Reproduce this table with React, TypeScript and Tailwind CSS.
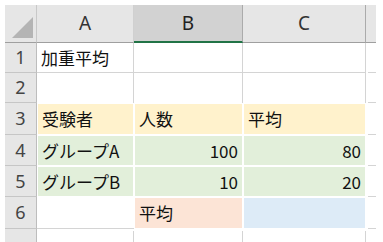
import React from 'react';

type CellProps = {
  text?: string;
  right?: boolean;
  fill?: string;
  edge?: string;
};

// one worksheet cell; filled cells get a white frame around the fill
const Cell: React.FC<CellProps> = ({ text, right, fill, edge = 'border-r border-b border-[#d4d4d4]' }) => {
  const label = (
    <span className={`w-full ${right ? 'text-right pr-[4px]' : 'pl-[4px]'} whitespace-nowrap`}>{text}</span>
  );
  if (fill) {
    return (
      <div className="flex pt-px pl-px border-r border-b border-white">
        <div className={`flex-1 flex items-center ${fill}`}>{label}</div>
      </div>
    );
  }
  return <div className={`flex items-center ${edge}`}>{label}</div>;
};

const RowHead: React.FC<{ n?: number }> = ({ n }) => (
  <div className="flex items-center justify-center bg-[#e6e6e6] border-r border-b border-r-[#bdbdbd] border-b-[#c6c6c6] text-[18px] text-[#444] font-['Noto_Sans',sans-serif]">
    {n}
  </div>
);

const Stub: React.FC<{ last?: boolean }> = ({ last }) => (
  <div className={last ? '' : 'border-b border-[#d4d4d4] ml-[2px]'} />
);

const yellow = 'bg-[#fff2cc]';
const green = 'bg-[#e2efda]';

export default function App() {
  return (
    <div className="w-[383px] h-[242px] bg-white overflow-hidden pt-[5px] pl-[5px] text-[17px] text-[#111] font-['Noto_Sans_CJK_JP',sans-serif]">
      <div className="grid grid-cols-[32px_97px_109px_123px_10px] grid-rows-[38px_30px_30px_32px_31px_31px_32px_14px]">
        {/* corner */}
        <div className="relative bg-[#e6e6e6] border-r border-b border-r-[#c8c8c8] border-b-[#9f9f9f]">
          <svg className="absolute left-[7px] top-[12px]" width="22" height="22" viewBox="0 0 22 22">
            <polygon points="0,21 21,21 21,0" fill="#b4b4b4" />
          </svg>
        </div>
        {/* column headers */}
        <div className="flex items-center justify-center bg-[#e6e6e6] border-r border-b border-r-[#d0d0d0] border-b-[#9f9f9f] text-[19px] text-[#333] font-['Noto_Sans',sans-serif]">
          A
        </div>
        <div className="flex items-center justify-center bg-[#d2d2d2] border-r border-b-2 border-r-[#ababab] border-b-[#217346] text-[19px] text-[#222] font-['Noto_Sans',sans-serif]">
          B
        </div>
        <div className="flex items-center justify-center bg-[#e6e6e6] border-r border-b border-r-[#ababab] border-b-[#9f9f9f] text-[19px] text-[#333] font-['Noto_Sans',sans-serif]">
          C
        </div>
        <div className="bg-[#e6e6e6] border-b border-[#9f9f9f]" />

        {/* row 1 */}
        <RowHead n={1} />
        <Cell text="加重平均" />
        <Cell />
        <Cell />
        <Stub />

        {/* row 2 */}
        <RowHead n={2} />
        <Cell edge="border-r border-[#d4d4d4]" />
        <Cell edge="border-r border-[#d4d4d4]" />
        <Cell edge="border-r border-[#d4d4d4]" />
        <Stub />

        {/* row 3 */}
        <RowHead n={3} />
        <Cell text="受験者" fill={yellow} />
        <Cell text="人数" fill={yellow} />
        <Cell text="平均" fill={yellow} />
        <Stub />

        {/* row 4 */}
        <RowHead n={4} />
        <Cell text="グループA" fill={green} />
        <Cell text="100" right fill={green} />
        <Cell text="80" right fill={green} />
        <Stub />

        {/* row 5 */}
        <RowHead n={5} />
        <Cell text="グループB" fill={green} />
        <Cell text="10" right fill={green} />
        <Cell text="20" right fill={green} />
        <Stub />

        {/* row 6 */}
        <RowHead n={6} />
        <Cell edge="border-b border-[#d4d4d4]" />
        <Cell text="平均" fill="bg-[#fce4d6]" />
        <Cell fill="bg-[#ddebf7]" />
        <Stub />

        {/* row 7, cut off */}
        <div className="bg-[#e6e6e6] border-r border-[#bdbdbd]" />
        <div className="border-r border-[#d4d4d4] mt-[2px]" />
        <div className="border-r border-[#d4d4d4] mt-[2px]" />
        <div className="border-r border-[#d4d4d4] mt-[2px]" />
        <Stub last />
      </div>
    </div>
  );
}
